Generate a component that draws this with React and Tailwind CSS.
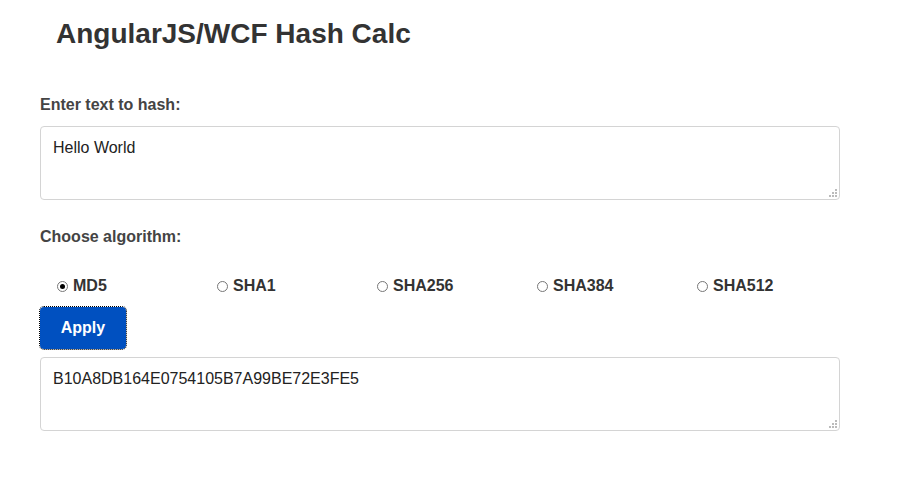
const algorithms = ['MD5', 'SHA1', 'SHA256', 'SHA384', 'SHA512'];

function Grip() {
  return (
    <svg className="absolute right-[2px] bottom-[2px]" width="10" height="10" viewBox="0 0 10 10">
      <rect x="8" y="2" width="2" height="2" fill="#bbb" />
      <rect x="5" y="5" width="2" height="2" fill="#bbb" />
      <rect x="8" y="5" width="2" height="2" fill="#bbb" />
      <rect x="2" y="8" width="2" height="2" fill="#bbb" />
      <rect x="5" y="8" width="2" height="2" fill="#bbb" />
      <rect x="8" y="8" width="2" height="2" fill="#bbb" />
    </svg>
  );
}

function Radio({ checked }) {
  return (
    <span className="relative inline-flex h-[11px] w-[11px] items-center justify-center rounded-full border border-[#777] bg-white">
      {checked && <span className="h-[5px] w-[5px] rounded-full bg-black" />}
    </span>
  );
}

export default function App() {
  return (
    <div className="min-h-[484px] w-[904px] bg-white font-['Liberation_Sans',Arial,sans-serif]">
      <div className="pl-[40px] pt-[17px]">
        {/* Header */}
        <h1 className="pl-[16px] text-[28px] font-bold leading-[34px] text-[#333]">AngularJS/WCF Hash Calc</h1>

        <p className="mt-[45px] text-[16px] font-bold leading-[18px] text-[#444]">Enter text to hash:</p>
        <div className="relative mt-[12px] h-[74px] w-[800px] rounded-[4px] border border-[#d4d4d4] px-[12px] py-[12px] text-[16px] leading-[18px] text-[#222]">
          Hello World
          <Grip />
        </div>

        <p className="mt-[28px] text-[16px] font-bold leading-[18px] text-[#444]">Choose algorithm:</p>

        {/* Algorithm options */}
        <div className="mt-[30px] flex">
          {algorithms.map((alg, i) => (
            <label key={alg} className="flex w-[160px] items-center gap-[5px] pl-[17px] text-[16px] font-bold leading-[20px] text-[#333]">
              <Radio checked={i === 0} />
              {alg}
            </label>
          ))}
        </div>

        <button className="mt-[11px] h-[42px] w-[86px] rounded-[4px] bg-[#0050c0] text-[16px] font-bold text-white outline-1 outline-dotted outline-black">
          Apply
        </button>

        <div className="relative mt-[8px] h-[74px] w-[800px] rounded-[4px] border border-[#d4d4d4] px-[12px] py-[12px] text-[16px] leading-[18px] text-[#222]">
          B10A8DB164E0754105B7A99BE72E3FE5
          <Grip />
        </div>
      </div>
    </div>
  );
}
